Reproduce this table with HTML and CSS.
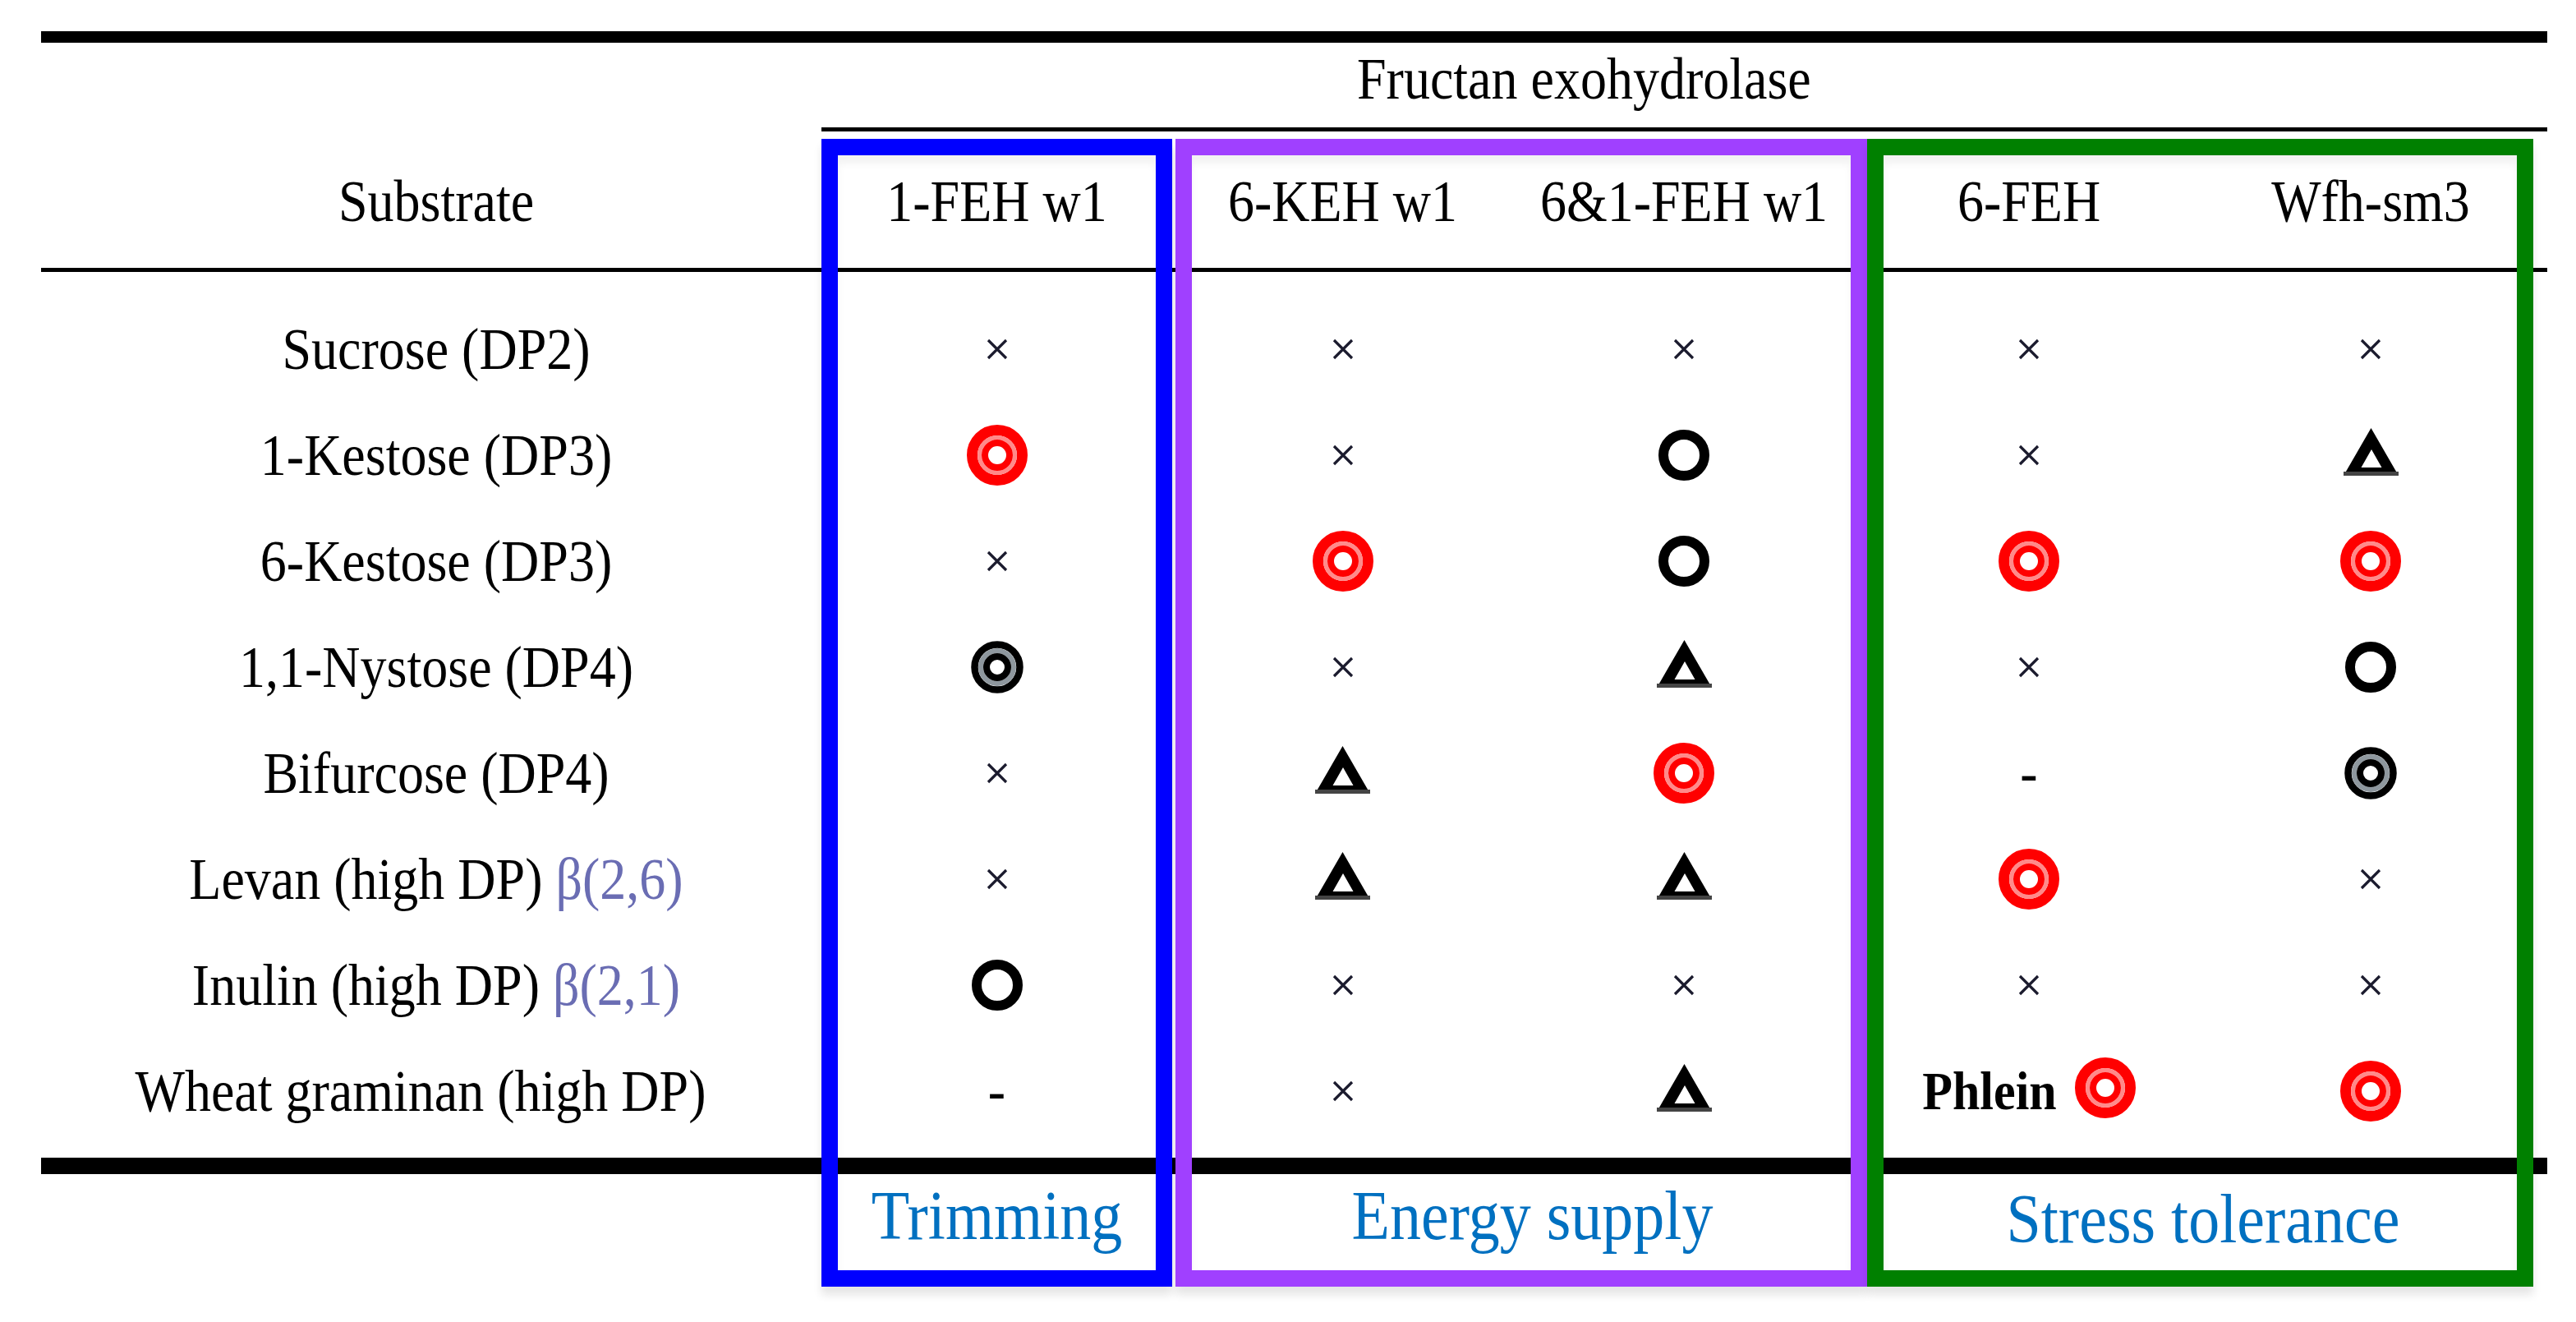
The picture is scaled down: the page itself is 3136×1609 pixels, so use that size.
FILE: index.html
```html
<!DOCTYPE html>
<html lang="en">
<head>
<meta charset="utf-8">
<title>Fructan exohydrolase substrates</title>
<link rel="stylesheet" href="styles.css">
</head>
<body>
<svg class="defs" width="0" height="0" aria-hidden="true">
  <defs>
    <symbol id="s-x" viewBox="0 0 30 28">
      <path d="M4 3 L26 25 M26 3 L4 25" stroke="#1b1b2e" stroke-width="3.2" fill="none"/>
    </symbol>
    <symbol id="s-red" viewBox="0 0 74 74">
      <circle cx="37" cy="37" r="30.5" fill="none" stroke="#ff0000" stroke-width="13"/>
      <circle cx="37" cy="37" r="21.5" fill="none" stroke="#ff8a8a" stroke-width="5"/>
      <circle cx="37" cy="37" r="15" fill="none" stroke="#ff0000" stroke-width="8"/>
    </symbol>
    <symbol id="s-blk" viewBox="0 0 64 64">
      <circle cx="32" cy="32" r="27.5" fill="none" stroke="#000" stroke-width="8.5"/>
      <circle cx="32" cy="32" r="20" fill="none" stroke="#8e979e" stroke-width="6"/>
      <circle cx="32" cy="32" r="13" fill="none" stroke="#000" stroke-width="8"/>
    </symbol>
    <symbol id="s-ring" viewBox="0 0 62 62">
      <circle cx="31" cy="31" r="25" fill="none" stroke="#000" stroke-width="12"/>
    </symbol>
    <symbol id="s-tri" viewBox="0 0 67 58">
      <path d="M33.5 0 L67 58 L0 58 Z M34 26 L46.5 48 L21.5 48 Z" fill="#000" fill-rule="evenodd"/>
      <rect x="0" y="53" width="67" height="5" fill="#444"/>
    </symbol>
  </defs>
</svg>

<div class="figure">
  <div class="table">
    <div class="rule rule-top"></div>

    <div class="cols title-row">
      <div class="title">Fructan exohydrolase</div>
    </div>

    <div class="rule rule-mid"></div>

    <div class="cols header">
      <div class="cell label">Substrate</div>
      <div class="cell">1-FEH w1</div>
      <div class="cell">6-KEH w1</div>
      <div class="cell">6&amp;1-FEH w1</div>
      <div class="cell">6-FEH</div>
      <div class="cell">Wfh-sm3</div>
    </div>

    <div class="rule rule-head"></div>

    <div class="body">
      <div class="cols row">
        <div class="cell label">Sucrose (DP2)</div>
        <div class="cell"><svg class="sym x"><use href="#s-x"/></svg></div>
        <div class="cell"><svg class="sym x"><use href="#s-x"/></svg></div>
        <div class="cell"><svg class="sym x"><use href="#s-x"/></svg></div>
        <div class="cell"><svg class="sym x"><use href="#s-x"/></svg></div>
        <div class="cell"><svg class="sym x"><use href="#s-x"/></svg></div>
      </div>
      <div class="cols row">
        <div class="cell label">1-Kestose (DP3)</div>
        <div class="cell"><svg class="sym red"><use href="#s-red"/></svg></div>
        <div class="cell"><svg class="sym x"><use href="#s-x"/></svg></div>
        <div class="cell"><svg class="sym ring"><use href="#s-ring"/></svg></div>
        <div class="cell"><svg class="sym x"><use href="#s-x"/></svg></div>
        <div class="cell"><svg class="sym tri"><use href="#s-tri"/></svg></div>
      </div>
      <div class="cols row">
        <div class="cell label">6-Kestose (DP3)</div>
        <div class="cell"><svg class="sym x"><use href="#s-x"/></svg></div>
        <div class="cell"><svg class="sym red"><use href="#s-red"/></svg></div>
        <div class="cell"><svg class="sym ring"><use href="#s-ring"/></svg></div>
        <div class="cell"><svg class="sym red"><use href="#s-red"/></svg></div>
        <div class="cell"><svg class="sym red"><use href="#s-red"/></svg></div>
      </div>
      <div class="cols row">
        <div class="cell label">1,1-Nystose (DP4)</div>
        <div class="cell"><svg class="sym blk"><use href="#s-blk"/></svg></div>
        <div class="cell"><svg class="sym x"><use href="#s-x"/></svg></div>
        <div class="cell"><svg class="sym tri"><use href="#s-tri"/></svg></div>
        <div class="cell"><svg class="sym x"><use href="#s-x"/></svg></div>
        <div class="cell"><svg class="sym ring"><use href="#s-ring"/></svg></div>
      </div>
      <div class="cols row">
        <div class="cell label">Bifurcose (DP4)</div>
        <div class="cell"><svg class="sym x"><use href="#s-x"/></svg></div>
        <div class="cell"><svg class="sym tri"><use href="#s-tri"/></svg></div>
        <div class="cell"><svg class="sym red"><use href="#s-red"/></svg></div>
        <div class="cell"><span class="dash">-</span></div>
        <div class="cell"><svg class="sym blk"><use href="#s-blk"/></svg></div>
      </div>
      <div class="cols row">
        <div class="cell label">Levan (high DP) <span class="beta">β(2,6)</span></div>
        <div class="cell"><svg class="sym x"><use href="#s-x"/></svg></div>
        <div class="cell"><svg class="sym tri"><use href="#s-tri"/></svg></div>
        <div class="cell"><svg class="sym tri"><use href="#s-tri"/></svg></div>
        <div class="cell"><svg class="sym red"><use href="#s-red"/></svg></div>
        <div class="cell"><svg class="sym x"><use href="#s-x"/></svg></div>
      </div>
      <div class="cols row">
        <div class="cell label">Inulin (high DP) <span class="beta">β(2,1)</span></div>
        <div class="cell"><svg class="sym ring"><use href="#s-ring"/></svg></div>
        <div class="cell"><svg class="sym x"><use href="#s-x"/></svg></div>
        <div class="cell"><svg class="sym x"><use href="#s-x"/></svg></div>
        <div class="cell"><svg class="sym x"><use href="#s-x"/></svg></div>
        <div class="cell"><svg class="sym x"><use href="#s-x"/></svg></div>
      </div>
      <div class="cols row">
        <div class="cell label wheat">Wheat graminan (high DP)</div>
        <div class="cell"><span class="dash">-</span></div>
        <div class="cell"><svg class="sym x"><use href="#s-x"/></svg></div>
        <div class="cell"><svg class="sym tri"><use href="#s-tri"/></svg></div>
        <div class="cell phlein-cell"><span class="phlein">Phlein</span><svg class="sym red"><use href="#s-red"/></svg></div>
        <div class="cell"><svg class="sym red"><use href="#s-red"/></svg></div>
      </div>
    </div>

    <div class="rule rule-bottom"></div>

    <div class="cols footer">
      <div class="role role-trim">Trimming</div>
      <div class="role role-energy">Energy supply</div>
      <div class="role role-stress">Stress tolerance</div>
    </div>

    <div class="box box-blue"></div>
    <div class="box box-purple"></div>
    <div class="box box-green"></div>
  </div>
</div>
</body>
</html>
```

FILE: styles.css
```css
html, body {
  margin: 0;
  padding: 0;
  background: #ffffff;
}

body {
  font-family: "Liberation Serif", "Times New Roman", serif;
  color: #000;
}

.defs {
  position: absolute;
  width: 0;
  height: 0;
  overflow: hidden;
}

.figure {
  width: 3136px;
  height: 1609px;
  box-sizing: border-box;
  padding: 38px 0 0 50px;
  overflow: hidden;
}

.table {
  position: relative;
  width: 3051px;
}

.cols {
  display: grid;
  grid-template-columns: 950px 427px 415px 416px 424px 408px 11px;
}

.rule {
  background: #000;
}

.rule-top {
  height: 14px;
}

.rule-mid {
  height: 5px;
  margin-left: 950px;
}

.rule-head {
  height: 5px;
}

.rule-bottom {
  height: 20px;
}

.title-row {
  height: 103px;
  box-sizing: border-box;
  padding-top: 14px;
  font-size: 64px;
  line-height: 64px;
}

.title {
  grid-column: 2 / -1;
  padding-left: 652px;
  white-space: nowrap;
  transform: scaleY(1.12);
}

.header {
  height: 166px;
  box-sizing: border-box;
  padding-top: 4px;
  align-items: center;
  font-size: 64px;
  line-height: 64px;
}

.cell {
  display: flex;
  align-items: center;
  justify-content: center;
  white-space: nowrap;
}

.header .cell,
.label {
  transform: scaleY(1.12);
}

.label {
  padding-left: 12px;
}

.label.wheat {
  padding-left: 0;
  padding-right: 26px;
}

.body {
  padding: 29px 0 17px;
}

.row {
  height: 129px;
  align-items: center;
  font-size: 64px;
  line-height: 64px;
}

.beta {
  color: #6a6db3;
  margin-left: 0.25em;
}

.sym {
  display: block;
  flex: none;
}

.sym.x {
  width: 30px;
  height: 28px;
}

.sym.red {
  width: 74px;
  height: 74px;
}

.sym.blk {
  width: 64px;
  height: 64px;
}

.sym.ring {
  width: 62px;
  height: 62px;
}

.sym.tri {
  width: 67px;
  height: 58px;
  margin-top: -8px;
}

.dash {
  font-weight: bold;
  font-size: 64px;
  line-height: 64px;
}

.phlein-cell {
  gap: 22px;
}

.phlein {
  font-weight: bold;
  font-size: 60px;
  line-height: 60px;
  transform: scaleY(1.1);
}

.phlein-cell .sym.red {
  margin-top: -8px;
}

.footer {
  box-sizing: border-box;
  padding-top: 12px;
  height: 130px;
  font-size: 76px;
  line-height: 80px;
  color: #0070c0;
}

.role {
  text-align: center;
  white-space: nowrap;
  transform: scaleY(1.1);
}

.role-trim {
  grid-column: 2 / 3;
}

.role-energy {
  grid-column: 3 / 5;
  padding-left: 46px;
}

.role-stress {
  grid-column: 5 / 7;
  padding-left: 16px;
  padding-top: 4px;
}

.box {
  position: absolute;
  top: 131px;
  height: 1397px;
  box-sizing: border-box;
  border: 20px solid;
  box-shadow: 0 10px 10px rgba(0, 0, 0, 0.10), inset 0 10px 10px rgba(0, 0, 0, 0.05);
  pointer-events: none;
}

.box-blue {
  left: 950px;
  width: 427px;
  border-color: #0000ff;
}

.box-purple {
  left: 1381px;
  width: 842px;
  border-color: #a040ff;
}

.box-green {
  left: 2223px;
  width: 811px;
  border-color: #008000;
}
```
